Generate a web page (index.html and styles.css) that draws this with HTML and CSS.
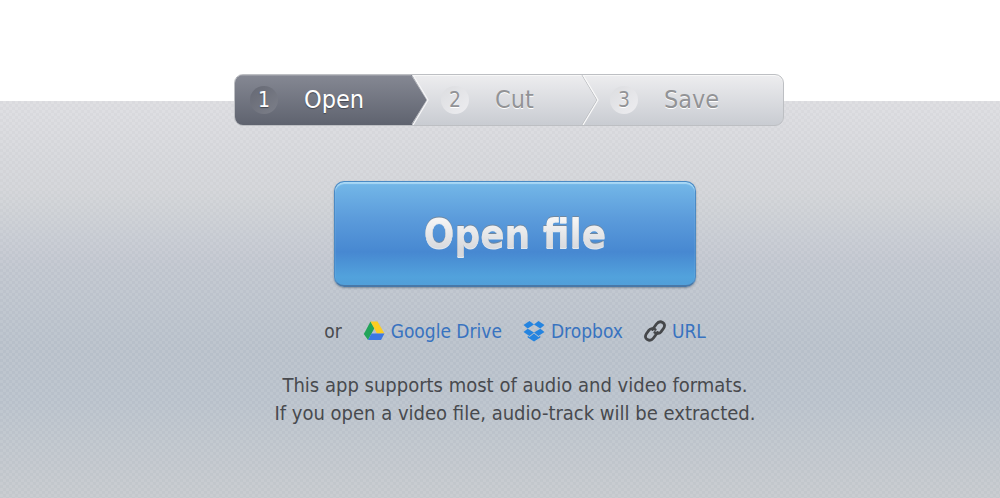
FILE: index.html
```html
<!DOCTYPE html>
<html lang="en">
<head>
    <meta charset="UTF-8">
    <meta name="viewport" content="width=device-width, initial-scale=1.0">
    <title>Audio Cutter</title>
    <link rel="stylesheet" href="styles.css">
</head>
<body>
    <header class="top"></header>
    <main class="stage">
        <ol class="steps">
            <li class="step step-open active" aria-current="step"><span class="num">1</span><span class="name">Open</span></li>
            <li class="arrow" aria-hidden="true">
                <svg width="18" height="50" viewBox="0 0 18 50">
                    <defs>
                        <linearGradient id="dark" x1="0" y1="0" x2="0" y2="1">
                            <stop offset="0" stop-color="#858893"/>
                            <stop offset="1" stop-color="#5f636f"/>
                        </linearGradient>
                    </defs>
                    <path d="M0 0H1L16 25L1 50H0Z" fill="url(#dark)"/>
                    <path d="M1 1L16 25L1 49" fill="none" stroke="#b9bbc1" stroke-width="1"/>
                    <path d="M2 0L17 25L2 50" fill="none" stroke="#f6f6f8" stroke-width="1.2"/>
                </svg>
            </li>
            <li class="step step-cut"><span class="num">2</span><span class="name">Cut</span></li>
            <li class="arrow" aria-hidden="true">
                <svg width="18" height="50" viewBox="0 0 18 50">
                    <path d="M1 0L16 25L1 50" fill="none" stroke="#bbbdc1" stroke-width="1"/>
                    <path d="M2 0L17 25L2 50" fill="none" stroke="#fafafa" stroke-width="1.2"/>
                </svg>
            </li>
            <li class="step step-save"><span class="num">3</span><span class="name">Save</span></li>
        </ol>

        <div class="content">
            <button type="button" class="open-button"><span class="open-label">Open file</span></button>

            <div class="sources">
                <span class="or">or</span>
                <a href="#drive" class="source">
                    <svg width="22" height="20" viewBox="0 0 22 20" aria-hidden="true">
                        <path d="M7.500 0.500L11.500 7L5 19L0.800 13Z" fill="#21a45a"/>
                        <path d="M7.500 0.500H14.500L21.500 12.500H14Z" fill="#fccd22"/>
                        <path d="M8.500 12.500H21.500L18 19H5Z" fill="#3c77e4"/>
                    </svg>
                    <span>Google Drive</span>
                </a>
                <a href="#dropbox" class="source">
                    <svg width="22" height="22" viewBox="0 0 22 22" aria-hidden="true" fill="#2484e0">
                        <path d="M6.500 1L11 4.600L4.700 8.400L0.500 5Z"/>
                        <path d="M15.500 1L11 4.600L17.300 8.400L21.500 5Z"/>
                        <path d="M0.500 12L4.700 8.700L11 12.500L6.500 16Z"/>
                        <path d="M21.500 12L17.300 8.700L11 12.500L15.500 16Z"/>
                        <path d="M11 13.500L15.400 17L17.300 15.800V17.500L11 21.500L4.700 17.500V15.800L6.600 17Z"/>
                    </svg>
                    <span>Dropbox</span>
                </a>
                <a href="#url" class="source">
                    <svg width="22" height="22" viewBox="0 0 22 22" aria-hidden="true" fill="none" stroke="#45474a" stroke-width="2.800" stroke-linecap="round">
                        <path d="M8.500 9.500L12.500 4C14 2 16.500 1.200 18.700 2.400S21 6.200 19.600 8.200L17 11.800C15.500 13.700 12.800 14 10.800 12.500"/>
                        <path d="M13.500 12.500L9.500 18C8 20 5.500 20.800 3.300 19.600S1 15.800 2.400 13.800L5 10.200C6.500 8.300 9.200 8 11.200 9.500"/>
                    </svg>
                    <span>URL</span>
                </a>
            </div>

            <p class="note">This app supports most of audio and video formats.<br>If you open a video file, audio-track will be extracted.</p>
        </div>
    </main>
</body>
</html>
```
FILE: styles.css
```css
* {
    box-sizing: border-box;
}
body {
    margin: 0;
    min-height: 100vh;
    display: flex;
    flex-direction: column;
    background: #fff;
    color: #484a4e;
    font-family: Tahoma, "DejaVu Sans Condensed", "DejaVu Sans", sans-serif;
    font-size: 19px;
}
.top {
    height: 101px;
}
.stage {
    flex: 1;
    display: flex;
    flex-direction: column;
    align-items: center;
    /* small checker over the grey gradient */
    background-image:
        repeating-conic-gradient(rgba(255,255,255,0.08) 0% 25%, rgba(90,100,110,0.01) 0% 50%),
        linear-gradient(#dcdce0 0%, #d2d4d8 22%, #c0c5ce 42%, #b8c0ca 62%, #b9c1cb 75%, #c5c9cd 100%);
    background-size: 6px 6px, 100% 100%;
}

/* steps */
.steps {
    display: flex;
    width: 550px;
    max-width: 100%;
    height: 52px;
    margin: -27px 0 0 18px;
    padding: 0;
    list-style: none;
    border: 1px solid #bdbfc3;
    border-radius: 9px;
    overflow: hidden;
    background: linear-gradient(#ededef, #c9ccd2);
    box-shadow: inset 0 1px 0 #f8f8f8;
}
.step {
    display: flex;
    align-items: center;
    gap: 26px;
    color: #929396;
    font-size: 25px;
    line-height: 28px;
    text-shadow: 0 1px 0 #fff;
}
.step-open {
    width: 176px;
    padding-left: 15px;
}
.step-cut {
    width: 152px;
    padding-left: 12px;
}
.step-save {
    flex: 1;
    padding-left: 11px;
}
.step.active {
    background: linear-gradient(#858893, #5f636f);
    color: #fff;
    text-shadow: 0 1px 1px #44474f;
    box-shadow: inset 0 1px 0 #9a9ca5;
}
.num {
    width: 28px;
    height: 28px;
    border-radius: 50%;
    background: linear-gradient(135deg, #dcdde0, #ededf0);
    font-size: 21px;
    text-align: center;
}
.active .num {
    background: linear-gradient(135deg, #666974, #7c7f89);
}
.arrow {
    width: 18px;
}
.arrow svg {
    display: block;
}

/* content */
.content {
    display: flex;
    flex-direction: column;
    align-items: center;
    padding: 55px 0 60px 30px;
}
.open-button {
    width: 362px;
    height: 106px;
    padding: 0;
    border: 1px solid #4b8ac4;
    border-bottom: 2px solid #4878a8;
    border-radius: 10px;
    background: linear-gradient(#74b8e8 0%, #5b9bdb 36%, #4788d1 68%, #52a2dc 92%, #519fd9 100%);
    box-shadow: inset 0 2px 1px #a9d8f5, 0 1px 2px rgba(60,80,100,0.5);
    font-family: inherit;
    font-size: 40px;
    font-weight: bold;
    cursor: pointer;
}
.open-label {
    background: linear-gradient(#f4f4f4 20%, #d6d8dc 85%);
    -webkit-background-clip: text;
    background-clip: text;
    color: transparent;
    filter: drop-shadow(0 -1px 0 #7088a0) drop-shadow(0 1px 0 #e4eaf0);
}
.sources {
    display: flex;
    align-items: center;
    gap: 21px;
    margin-top: 32px;
    line-height: 24px;
}
.source {
    display: flex;
    align-items: center;
    gap: 6px;
    color: #3873c0;
    text-decoration: none;
}
.source:hover {
    text-decoration: underline;
}
.note {
    margin: 28px 0 0;
    font-size: 20px;
    line-height: 28px;
    text-align: center;
}
```
